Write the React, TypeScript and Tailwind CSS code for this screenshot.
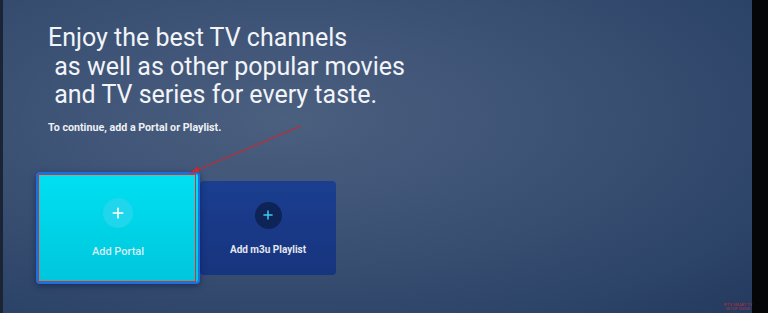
import { Plus } from 'lucide-react'

function PortalCard() {
  return (
    <div className="relative w-[164px] h-[112px] rounded-[4px] border-2 border-[#1d6fe0] bg-gradient-to-b from-[#00e0f2] to-[#00c6dc] flex flex-col items-center pt-[24px] shadow-[0_2px_6px_rgba(0,20,60,0.5)]">
      <div className="w-[30px] h-[30px] rounded-full bg-[#1fd6ec] flex items-center justify-center">
        <Plus className="w-[16px] h-[16px] text-white" strokeWidth={2.6} />
      </div>
      <span className="mt-[16px] text-[11px] font-medium text-[#d6eef4]">Add Portal</span>
      {/* red annotation box */}
      <div className="absolute inset-[0px] right-[2px] border border-[#d8303a] pointer-events-none" />
    </div>
  )
}

function PlaylistCard() {
  return (
    <div className="w-[136px] h-[94px] rounded-[4px] bg-gradient-to-b from-[#1b3e90] to-[#17347e] flex flex-col items-center pt-[21px]">
      <div className="w-[27px] h-[27px] rounded-full bg-[#0e2457] flex items-center justify-center">
        <Plus className="w-[14px] h-[14px] text-[#3fc8f2]" strokeWidth={2.6} />
      </div>
      <span className="mt-[13px] text-[10px] font-bold text-[#e4e8f0]">Add m3u Playlist</span>
    </div>
  )
}

export default function App() {
  return (
    <div className="w-[768px] h-[313px] flex bg-black overflow-hidden font-['Roboto','Liberation_Sans',sans-serif]">
      <div className="w-[3px] bg-[#1a2434]" />
      <div className="relative flex-1 flex flex-col bg-[radial-gradient(ellipse_at_38%_38%,#4b5f7f_0%,#3b5174_45%,#2c4468_80%,#243a5e_100%)]">
        <h1 className="mt-[24px] ml-[45px] text-[25px] leading-[28.5px] text-[#f2f4f8] font-normal whitespace-pre">
          {'Enjoy the best TV channels\n as well as other popular movies\n and TV series for every taste.'}
        </h1>
        <p className="mt-[10px] ml-[45px] text-[10.7px] font-bold text-[#eef0f4]">
          To continue, add a Portal or Playlist.
        </p>

        <div className="mt-[36px] ml-[33px] flex items-center">
          <PortalCard />
          <PlaylistCard />
        </div>

        {/* annotation arrow */}
        <svg className="absolute left-0 top-0 pointer-events-none" width="749" height="313">
          <line x1="298" y1="126" x2="192" y2="171" stroke="#c42a34" strokeWidth="1.2" />
          <path d="M186 173.5 L195 166.5 L196.5 172 Z" fill="#c42a34" />
        </svg>

        <div className="absolute right-[0px] bottom-[2px] flex flex-col items-center leading-[4px] text-[4px] text-[#b03040]">
          <span>IPTV SMART TV</span>
          <span>SETUP GUIDE</span>
        </div>
      </div>
      <div className="w-[16px] bg-[#050608]" />
    </div>
  )
}
